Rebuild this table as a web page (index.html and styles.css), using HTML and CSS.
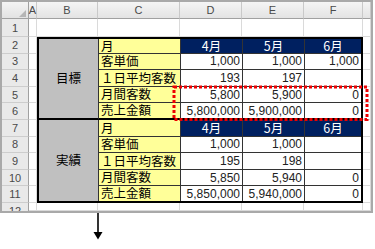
FILE: index.html
```html
<!DOCTYPE html>
<html lang="ja">
<head>
<meta charset="utf-8">
<title>目標と実績</title>
<link rel="stylesheet" href="styles.css">
</head>
<body>
<div class="sheet">
  <div class="frame">
    <div class="corner"><svg width="27" height="17" viewBox="0 0 27 17"><polygon points="24,8 24,15 17,15" fill="#b5b5b5"/></svg></div>
    <div class="ch">A</div><div class="ch">B</div><div class="ch">C</div><div class="ch">D</div><div class="ch">E</div><div class="ch">F</div><div class="ch"></div>

    <div class="rh">1</div><div class="c"></div><div class="c"></div><div class="c"></div><div class="c"></div><div class="c"></div><div class="c"></div><div class="c"></div>
    <div class="rh">2</div><div class="c"></div><div class="c"></div>
    <div class="rh">3</div><div class="c"></div><div class="c"></div>
    <div class="rh">4</div><div class="c"></div><div class="c"></div>
    <div class="rh">5</div><div class="c"></div><div class="c"></div>
    <div class="rh">6</div><div class="c"></div><div class="c"></div>
    <div class="rh">7</div><div class="c"></div><div class="c"></div>
    <div class="rh">8</div><div class="c"></div><div class="c"></div>
    <div class="rh">9</div><div class="c"></div><div class="c"></div>
    <div class="rh">10</div><div class="c"></div><div class="c"></div>
    <div class="rh">11</div><div class="c"></div><div class="c"></div>
    <div class="rh rh-cut"><span>12</span></div><div class="c"></div><div class="c"></div><div class="c"></div><div class="c"></div><div class="c"></div><div class="c"></div><div class="c"></div>

    <div class="tbl">
      <div class="g g1">目標</div>
      <div class="y">月</div><div class="h">4月</div><div class="h">5月</div><div class="h last">6月</div>
      <div class="y">客単価</div><div class="n">1,000</div><div class="n">1,000</div><div class="n last">1,000</div>
      <div class="y">１日平均客数</div><div class="n">193</div><div class="n">197</div><div class="n last"></div>
      <div class="y">月間客数</div><div class="n">5,800</div><div class="n">5,900</div><div class="n last">0</div>
      <div class="y sep">売上金額</div><div class="n sep">5,800,000</div><div class="n sep">5,900,000</div><div class="n sep last">0</div>
      <div class="g g2">実績</div>
      <div class="y">月</div><div class="h">4月</div><div class="h">5月</div><div class="h last">6月</div>
      <div class="y">客単価</div><div class="n">1,000</div><div class="n">1,000</div><div class="n last"></div>
      <div class="y">１日平均客数</div><div class="n">195</div><div class="n">198</div><div class="n last"></div>
      <div class="y">月間客数</div><div class="n">5,850</div><div class="n">5,940</div><div class="n last">0</div>
      <div class="y bottom">売上金額</div><div class="n bottom">5,850,000</div><div class="n bottom">5,940,000</div><div class="n bottom last">0</div>
    </div>
  </div>

  <svg class="mark" width="197" height="37" viewBox="0 0 197 37"><rect x="2" y="2" width="193" height="32.5" fill="none" stroke="#ee0000" stroke-width="3" stroke-dasharray="3 2"/></svg>

  <div class="arrow"><svg width="10" height="28" viewBox="0 0 10 28"><line x1="5" y1="0" x2="5" y2="21" stroke="#000" stroke-width="1.6"/><polygon points="0.5,19 9.5,19 5,26.5" fill="#000"/></svg></div>
</div>
</body>
</html>
```

FILE: styles.css
```css
html, body {
  margin: 0;
  background: #fff;
}
body {
  font-family: "Liberation Sans", Arial, sans-serif;
}
.sheet {
  position: relative;
  width: 375px;
  height: 249px;
}
.frame {
  display: grid;
  grid-template-columns: 27px 8px 61px 82px 62px 62px 59px 8px;
  grid-template-rows: 17px 18px repeat(10, 16.6px) 8px;
  width: 373px;
  box-sizing: border-box;
  border: 2px solid #a9a9a9;
  background: #fff;
  overflow: hidden;
}
.corner {
  background: linear-gradient(#f4f4f4, #e2e2e2);
  border-right: 1px solid #a0a0a0;
  border-bottom: 1px solid #a0a0a0;
  box-sizing: border-box;
  overflow: hidden;
}
.corner svg { display: block; }
.ch {
  display: flex;
  align-items: center;
  justify-content: center;
  background: linear-gradient(#f5f5f5, #e3e3e3);
  border-right: 1px solid #c9c9c9;
  border-bottom: 1px solid #a0a0a0;
  box-sizing: border-box;
  font-size: 11px;
  color: #4a4a4a;
}
.rh {
  display: flex;
  align-items: center;
  justify-content: center;
  background: #e9e9e9;
  border-right: 1px solid #a0a0a0;
  border-bottom: 1px solid #cdcdcd;
  box-sizing: border-box;
  font-size: 11px;
  color: #4a4a4a;
}
.rh-cut {
  display: block;
  overflow: hidden;
  border-bottom: 0;
  text-align: center;
}
.rh-cut span {
  display: block;
  line-height: 16.6px;
}
.c {
  background: #fff;
  border-right: 1px solid #dadada;
  border-bottom: 1px solid #dadada;
  box-sizing: border-box;
}
.tbl {
  grid-column: 3 / 8;
  grid-row: 3 / 13;
  display: grid;
  grid-template-columns: 60px 82px 62px 62px 56px;
  grid-template-rows: 14.6px repeat(8, 16.6px) 14.6px;
  border: 2px solid #000;
  box-sizing: border-box;
  background: #fff;
}
.tbl > div {
  box-sizing: border-box;
  border-right: 1px solid #333;
  border-bottom: 1px solid #333;
  display: flex;
  align-items: center;
  line-height: 1;
  white-space: nowrap;
}
.tbl > .last { border-right: 0; }
.tbl > .bottom { border-bottom: 0; }
.tbl > .sep { border-bottom: 2px solid #000; }
.g {
  grid-row: span 5;
  justify-content: center;
  background: #c0c0c0;
  font-family: "Noto Sans CJK JP", sans-serif;
  font-size: 12.5px;
  color: #000;
}
.tbl > .g1 { border-bottom: 2px solid #000; }
.tbl > .g2 { border-bottom: 0; }
.y {
  background: #ffff99;
  padding-left: 2px;
  font-family: "Noto Sans CJK JP", sans-serif;
  font-size: 12.5px;
  color: #000;
}
.h {
  justify-content: center;
  background: #002060;
  font-family: "Noto Sans CJK JP", sans-serif;
  font-size: 12.5px;
  color: #fff;
}
.n {
  justify-content: flex-end;
  padding-right: 2px;
  background: #fff;
  font-family: "Liberation Sans", Arial, sans-serif;
  font-size: 12px;
  color: #222;
}
.mark {
  position: absolute;
  left: 172px;
  top: 85px;
}
.arrow {
  padding-left: 93px;
  height: 28px;
}
.arrow svg { display: block; }
```
